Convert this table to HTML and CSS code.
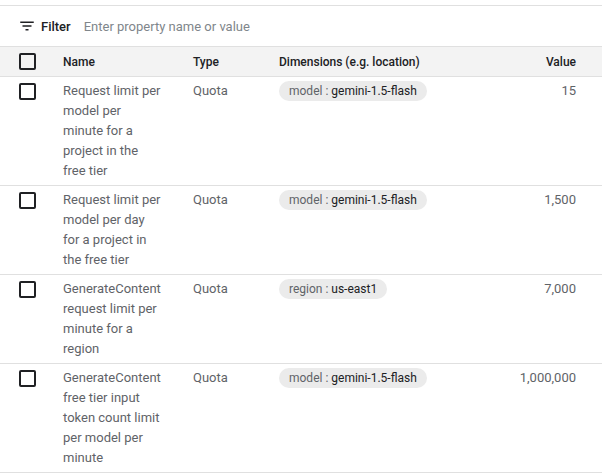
FILE: index.html
```html
<!DOCTYPE html>
<html>
<head>
<meta charset="utf-8">
<link rel="stylesheet" href="styles.css">
</head>
<body>
<div class="panel">
  <div class="filter-bar">
    <svg class="filter-icon" width="18" height="18" viewBox="0 0 24 24"><path d="M3 6h18v2H3zM6 11h12v2H6zM10 16h4v2h-4z" fill="#202124"/></svg>
    <span class="filter-label">Filter</span>
    <span class="filter-input">Enter property name or value</span>
  </div>
  <table class="grid">
    <colgroup>
      <col class="c-check"><col class="c-name"><col class="c-type"><col class="c-dim"><col class="c-val">
    </colgroup>
    <thead>
      <tr>
        <th><span class="box"></span></th>
        <th>Name</th>
        <th>Type</th>
        <th>Dimensions (e.g. location)</th>
        <th class="num">Value</th>
      </tr>
    </thead>
    <tbody>
      <tr>
        <td><span class="box"></span></td>
        <td><div class="name">Request limit per model per minute for a project in the free tier</div></td>
        <td>Quota</td>
        <td><span class="chip">model : <b>gemini-1.5-flash</b></span></td>
        <td class="num">15</td>
      </tr>
      <tr>
        <td><span class="box"></span></td>
        <td><div class="name">Request limit per model per day for a project in the free tier</div></td>
        <td>Quota</td>
        <td><span class="chip">model : <b>gemini-1.5-flash</b></span></td>
        <td class="num">1,500</td>
      </tr>
      <tr>
        <td><span class="box"></span></td>
        <td><div class="name">GenerateContent request limit per minute for a region</div></td>
        <td>Quota</td>
        <td><span class="chip">region : <b>us-east1</b></span></td>
        <td class="num">7,000</td>
      </tr>
      <tr>
        <td><span class="box"></span></td>
        <td><div class="name">GenerateContent free tier input token count limit per model per minute</div></td>
        <td>Quota</td>
        <td><span class="chip">model : <b>gemini-1.5-flash</b></span></td>
        <td class="num">1,000,000</td>
      </tr>
    </tbody>
  </table>
</div>
</body>
</html>
```
FILE: styles.css
```css
html, body {
  margin: 0;
  padding: 0;
  background: #fff;
}
body {
  font-family: Roboto, "Liberation Sans", Arial, sans-serif;
  font-size: 13px;
  color: #5f6368;
}
.panel {
  padding-top: 5px;
}
.filter-bar {
  display: flex;
  align-items: center;
  height: 40px;
  border-top: 1px solid #e0e0e0;
  padding-left: 18px;
}
.filter-icon {
  margin-right: 5px;
}
.filter-label {
  color: #202124;
  font-weight: 500;
  margin-right: 13px;
}
.filter-input {
  color: #80868b;
}
.grid {
  width: 100%;
  border-collapse: collapse;
  table-layout: fixed;
}
.c-check { width: 63px; }
.c-name { width: 130px; }
.c-type { width: 86px; }
.c-dim { width: 200px; }
.grid th {
  background: #f3f3f3;
  color: #202124;
  font-size: 12px;
  font-weight: 500;
  text-align: left;
  height: 29px;
  padding: 0;
  border-top: 1px solid #e0e0e0;
  border-bottom: 1px solid #e0e0e0;
  vertical-align: middle;
}
.grid td {
  padding: 4px 0;
  line-height: 20px;
  vertical-align: top;
  border-bottom: 1px solid #e0e0e0;
}
.grid th.num, .grid td.num {
  text-align: right;
  padding-right: 26px;
}
.box {
  display: block;
  box-sizing: border-box;
  width: 17px;
  height: 17px;
  border: 2px solid #202124;
  border-radius: 2px;
  margin-left: 19px;
}
.grid td .box {
  margin-top: 2px;
}
.name {
  width: 100px;
}
.chip {
  display: inline-block;
  background: #ebebeb;
  border-radius: 10px;
  padding: 0 10px;
  font-size: 12px;
  line-height: 20px;
  color: #5f6368;
}
.chip b {
  font-weight: 400;
  color: #202124;
}
```
